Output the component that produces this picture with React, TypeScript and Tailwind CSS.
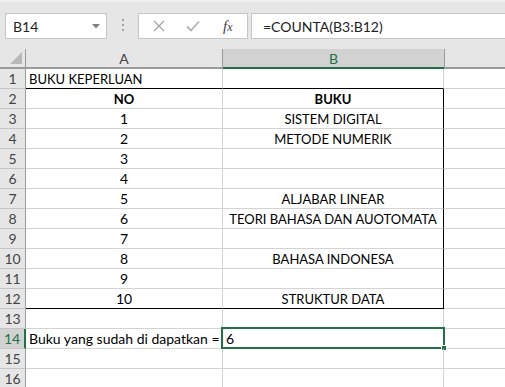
import React from "react";

type Row = { n: number; a: string; b: string; aAlign?: string; bold?: boolean };

const rows: Row[] = [
  { n: 1, a: "BUKU KEPERLUAN", b: "", aAlign: "justify-start" },
  { n: 2, a: "NO", b: "BUKU", bold: true },
  { n: 3, a: "1", b: "SISTEM DIGITAL" },
  { n: 4, a: "2", b: "METODE NUMERIK" },
  { n: 5, a: "3", b: "" },
  { n: 6, a: "4", b: "" },
  { n: 7, a: "5", b: "ALJABAR LINEAR" },
  { n: 8, a: "6", b: "TEORI BAHASA DAN AUOTOMATA" },
  { n: 9, a: "7", b: "" },
  { n: 10, a: "8", b: "BAHASA INDONESA" },
  { n: 11, a: "9", b: "" },
  { n: 12, a: "10", b: "STRUKTUR DATA" },
  { n: 13, a: "", b: "" },
  { n: 14, a: "Buku yang sudah di dapatkan =", b: "6", aAlign: "justify-start" },
  { n: 15, a: "", b: "" },
  { n: 16, a: "", b: "" },
];

const font = { fontFamily: "Lato, 'Open Sans', sans-serif" };

// caps text in Calibri runs narrower than Lato, so shrink it a little
const size = (s: string) => (/[a-z]/.test(s) || /^\d+$/.test(s) ? "text-[14px]" : "text-[13px]");

export default function App() {
  return (
    <div
      className="w-[505px] h-[387px] overflow-hidden bg-white text-[14px] text-black"
      style={font}
    >
      {/* formula bar */}
      <div className="h-[49px] bg-[#e6e6e6] flex items-start pt-[13px] pl-[5px] border-t-2 border-[#efefef]">
        <div className="w-[102px] h-[26px] bg-white border border-[#c6c6c6] flex items-center pl-[7px] pr-[6px] mt-[-2px]">
          <span className="flex-1 text-[#222]">B14</span>
          <svg width="8" height="5" viewBox="0 0 8 5">
            <path d="M0 0 L8 0 L4 4.5 Z" fill="#7f7f7f" />
          </svg>
        </div>
        <div className="w-[31px] h-[24px] flex flex-col items-center justify-center gap-[3px] mt-[-2px]">
          <span className="w-[2px] h-[2px] bg-[#a0a0a0]" />
          <span className="w-[2px] h-[2px] bg-[#a0a0a0]" />
          <span className="w-[2px] h-[2px] bg-[#a0a0a0]" />
        </div>
        <div className="w-[110px] h-[26px] bg-white border border-[#c6c6c6] flex items-center mt-[-2px]">
          <svg className="ml-[14px]" width="12" height="12" viewBox="0 0 12 12">
            <path d="M1 1 L11 11 M11 1 L1 11" stroke="#a6a6a6" strokeWidth="1.3" />
          </svg>
          <svg className="ml-[21px]" width="14" height="12" viewBox="0 0 14 12">
            <path d="M1 6.5 L5 10.5 L13 1.5" stroke="#b4b4b4" strokeWidth="1.8" fill="none" />
          </svg>
          <span
            className="ml-[23px] italic text-[15px] text-[#444] leading-none"
            style={{ fontFamily: "'Liberation Serif', serif" }}
          >
            f<span className="text-[12px]">x</span>
          </span>
        </div>
        <div className="flex-1 h-[26px] bg-white border border-r-0 border-[#c6c6c6] flex items-center pl-[11px] ml-[3px] mt-[-2px] text-[#222]">
          =COUNTA(B3:B12)
        </div>
      </div>

      {/* column headers */}
      <div className="flex h-[20px] bg-[#e6e6e6] text-[#444]">
        <div className="w-[26px] border-r border-b-2 border-[#9b9b9b] relative">
          <svg className="absolute right-[3px] bottom-[3px]" width="12" height="12" viewBox="0 0 12 12">
            <path d="M12 0 L12 12 L0 12 Z" fill="#b9b9b9" />
          </svg>
        </div>
        <div className="w-[197px] border-r border-b-2 border-[#9b9b9b] flex items-center justify-center">
          A
        </div>
        <div className="w-[221px] bg-[#d2d2d2] border-b-2 border-[#217346] flex items-center justify-center text-[#217346]">
          B
        </div>
        <div className="flex-1 border-l border-b-2 border-[#9b9b9b]" />
      </div>

      {/* rows */}
      {rows.map((r) => {
        const inTable = r.n >= 2 && r.n <= 12;
        const topRow = r.n === 1;
        const lastRow = r.n === 12;
        const sel = r.n === 14;
        const bottom = topRow || lastRow ? "border-b-black" : "border-b-[#d4d4d4]";
        return (
          <div key={r.n} className="flex h-[20px] leading-[18px]">
            <div
              className={
                sel
                  ? "w-[26px] bg-[#d2d2d2] border-r-2 border-r-[#217346] border-b border-b-[#c4c4c4] flex items-end justify-center text-[#217346]"
                  : "w-[26px] bg-[#e6e6e6] border-r border-r-[#9b9b9b] border-b border-b-[#c4c4c4] flex items-end justify-center text-[#444]"
              }
            >
              {r.n}
            </div>
            <div
              className={`w-[197px] border-r border-r-[#d4d4d4] border-b ${bottom} flex items-end px-[3px] whitespace-nowrap ${size(
                r.a
              )} ${r.aAlign ?? "justify-center"} ${r.bold ? "font-bold" : ""}`}
            >
              {r.a}
            </div>
            <div
              className={`relative w-[221px] border-r border-b ${bottom} ${
                inTable ? "border-r-black" : "border-r-[#d4d4d4]"
              } flex items-end px-[3px] whitespace-nowrap ${size(r.b)} ${
                sel ? "justify-start" : "justify-center"
              } ${r.bold ? "font-bold" : ""}`}
            >
              {r.b}
              {sel && (
                <div className="absolute left-[-2px] top-[-2px] w-[224px] h-[22px] border-2 border-[#217346]">
                  <span className="absolute right-[-4px] bottom-[-4px] w-[6px] h-[6px] bg-[#217346] border border-white" />
                </div>
              )}
            </div>
            <div className="flex-1 border-b border-b-[#d4d4d4]" />
          </div>
        );
      })}
    </div>
  );
}
